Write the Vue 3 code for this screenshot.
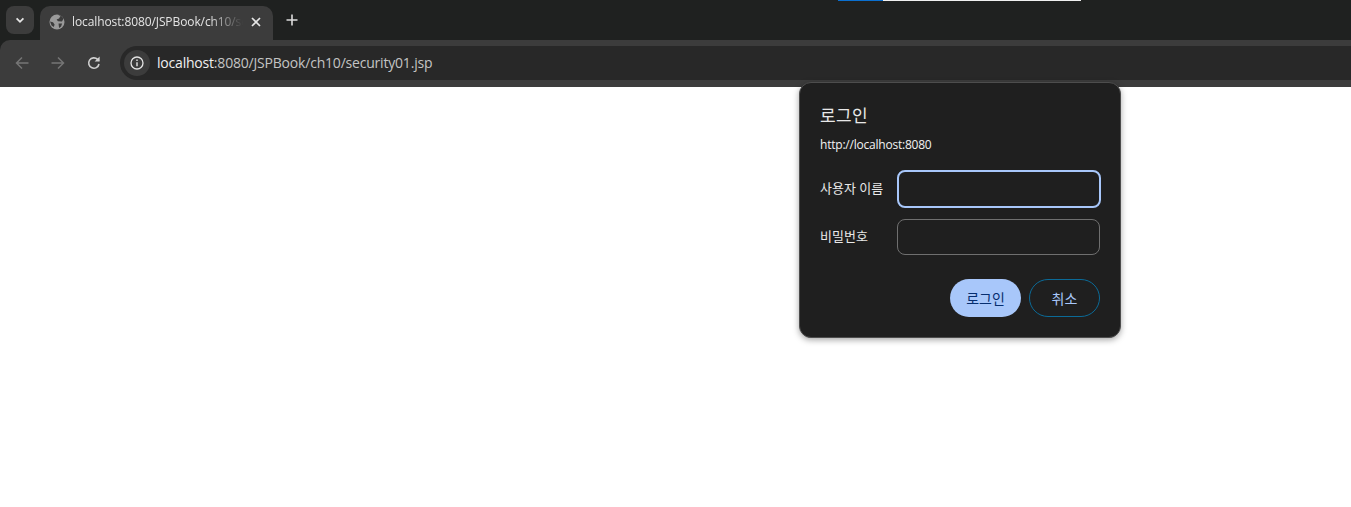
<script setup>
const fields = [
  { label: '사용자 이름', focused: true },
  { label: '비밀번호', focused: false },
]
</script>

<template>
  <div class="page">
    <header class="browser">
      <div class="tabstrip">
        <div class="progress"><span class="blue"></span><span class="white"></span></div>
        <button class="tabsearch">
          <svg width="12" height="12" viewBox="0 0 12 12"><path d="M2.6 4.4 6 7.8l3.4-3.4" fill="none" stroke="#e6e6e6" stroke-width="1.8"/></svg>
        </button>
        <div class="tab">
          <svg class="globe" width="16" height="16" viewBox="0 0 16 16">
            <circle cx="8" cy="8" r="7.5" fill="#9a9a9a"/>
            <path d="M9 .8 11.5 2 10 4.6 7.6 5.4 9 7.2 13 7.6 14.6 4.6 13 2.4 10.6 .8ZM9.5 9.4h3.6l-1 3-2 1.6ZM1 7.4 4 8.2 5.6 10.4 4.8 13 2.6 11.4Z" fill="#3c3c3c"/>
          </svg>
          <span class="tabtitle">localhost:8080/JSPBook/ch10/security01.jsp</span>
          <svg class="close" width="10" height="10" viewBox="0 0 10 10"><path d="M1 1l8 8M9 1l-8 8" stroke="#e6e6e6" stroke-width="1.7"/></svg>
        </div>
        <svg class="plus" width="12" height="12" viewBox="0 0 12 12"><path d="M6 .5v11M.5 6h11" stroke="#dcdcdc" stroke-width="1.6"/></svg>
      </div>
      <div class="toolbar">
        <svg class="nav" width="16" height="16" viewBox="0 0 16 16"><path d="M14.5 8H2.5M8 2.5 2.5 8 8 13.5" fill="none" stroke="#757575" stroke-width="1.5"/></svg>
        <svg class="nav" width="16" height="16" viewBox="0 0 16 16"><path d="M1.5 8h12M8 2.5 13.5 8 8 13.5" fill="none" stroke="#757575" stroke-width="1.5"/></svg>
        <svg class="nav" width="16" height="16" viewBox="0 0 16 16"><path d="M13 9a5.2 5.2 0 1 1-1.4-4.6L13 5.8" fill="none" stroke="#d0d0d0" stroke-width="1.6"/><path d="M13.6 1.6v5h-5z" fill="#d0d0d0"/></svg>
        <div class="omnibox">
          <span class="chip">
            <svg width="14" height="14" viewBox="0 0 14 14"><circle cx="7" cy="7" r="6" fill="none" stroke="#e4e4e4" stroke-width="1.3"/><path d="M7 6.2v4M7 3.6v1.5" stroke="#e4e4e4" stroke-width="1.4"/></svg>
          </span>
          <span class="url"><span class="host">localhost</span>:8080/JSPBook/ch10/security01.jsp</span>
        </div>
      </div>
    </header>

    <section class="dialog">
      <h1>로그인</h1>
      <p class="origin">http://localhost:8080</p>
      <div class="fields">
        <label v-for="field in fields" :key="field.label" class="field">
          <span class="label">{{ field.label }}</span>
          <span class="input" :class="{ focused: field.focused }"></span>
        </label>
      </div>
      <div class="actions">
        <button class="primary">로그인</button>
        <button class="secondary">취소</button>
      </div>
    </section>
  </div>
</template>

<style>
html, body { margin: 0; background: #fff; overflow: hidden; }
</style>

<style scoped>
.page {
  position: relative;
  height: 507px;
  background: #fff;
  font-family: "Open Sans", "Noto Sans CJK KR", sans-serif;
}
.browser { background: #1f2120; }
.tabstrip {
  position: relative;
  height: 40px;
  display: flex;
  align-items: flex-end;
}
.progress {
  position: absolute;
  top: 0;
  left: 838px;
  height: 1px;
  display: flex;
}
.blue { width: 45px; background: #0a6fcf; }
.white { width: 198px; background: #f0f0f0; }
.tabsearch {
  align-self: flex-start;
  width: 28px;
  height: 28px;
  margin: 6px 6px 0 6px;
  padding: 0;
  border: 0;
  border-radius: 8px;
  background: #3c3c3c;
  display: flex;
  align-items: center;
  justify-content: center;
}
.tab {
  width: 233px;
  height: 34px;
  box-sizing: border-box;
  padding: 0 12px 0 9px;
  border-radius: 10px 10px 0 0;
  background: #3c3c3c;
  display: flex;
  align-items: center;
}
.globe { flex: none; margin-top: -3px; }
.tabtitle {
  flex: 1;
  min-width: 0;
  margin: -3px 8px 0 7px;
  overflow: hidden;
  white-space: nowrap;
  font-size: 12px;
  line-height: 18px;
  color: #e4e4e4;
  -webkit-mask-image: linear-gradient(90deg, #000 80%, transparent);
  mask-image: linear-gradient(90deg, #000 80%, transparent);
  letter-spacing: -0.1px;
}
.close { flex: none; margin-top: -3px; }
.plus { align-self: center; margin: -1px 0 0 13px; }
.toolbar {
  height: 47px;
  box-sizing: border-box;
  padding: 6px 0 7px 14px;
  border-radius: 10px 0 0 0;
  background: #3c3c3c;
  display: flex;
  align-items: center;
  gap: 20px;
}
.omnibox {
  flex: 1;
  height: 34px;
  margin-left: -2px;
  padding-left: 4px;
  border-radius: 17px 0 0 17px;
  background: #282828;
  display: flex;
  align-items: center;
}
.chip {
  width: 26px;
  height: 26px;
  border-radius: 50%;
  background: #3c3c3c;
  display: flex;
  align-items: center;
  justify-content: center;
}
.url {
  margin: -2px 0 0 7px;
  font-size: 14px;
  color: #c4c4c4;
  letter-spacing: -0.2px;
}
.host { color: #f0f0f0; }
.dialog {
  position: absolute;
  top: 82px;
  left: 799px;
  width: 322px;
  height: 256px;
  box-sizing: border-box;
  padding: 22px 20px 0 20px;
  border: 1px solid #4d4d4d;
  border-radius: 12px;
  background: #1f1f1f;
  box-shadow: 0 2px 6px rgba(0, 0, 0, 0.35);
  color: #e8e8e8;
}
h1 {
  margin: 0;
  font-size: 17px;
  line-height: 22px;
  font-weight: 400;
  letter-spacing: 0.3px;
}
.origin {
  margin: 9px 0 0;
  font-size: 12px;
  line-height: 18px;
  letter-spacing: -0.22px;
  color: #f2f2f2;
}
.fields {
  margin-top: 16px;
  display: flex;
  flex-direction: column;
  gap: 11px;
}
.field {
  display: flex;
  align-items: center;
  justify-content: space-between;
  height: 37px;
  font-size: 13px;
}
.label { margin-top: -2px; }
.input {
  width: 201px;
  height: 34px;
  border: 1px solid #6f6f6f;
  border-radius: 8px;
}
.input.focused {
  width: 200px;
  height: 34px;
  border: 2px solid #a8c7fa;
  margin: 0 -1px 0 0;
}
.actions {
  margin-top: 24px;
  display: flex;
  justify-content: flex-end;
  gap: 8px;
}
button { font-family: inherit; }
.actions button {
  width: 71px;
  height: 38px;
  border-radius: 19px;
  font-size: 14px;
  padding: 0;
}
.primary { border: 0; background: #a8c7fa; color: #062e6f; }
.secondary { border: 1px solid #0b6a97; background: transparent; color: #a8c7fa; }
</style>
